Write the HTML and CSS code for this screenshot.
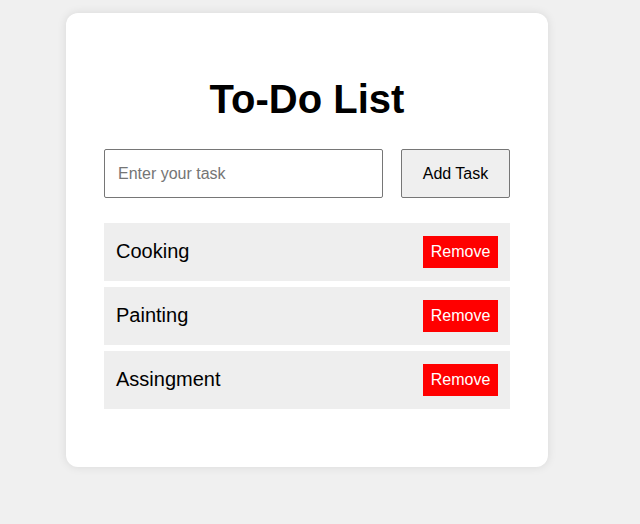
FILE: index.html
```html
<!DOCTYPE html>
<html>
<head>
<meta charset="utf-8">
<link rel="stylesheet" href="styles.css">
</head>
<body>
<div class="card">
  <h1 class="title">To-Do List</h1>
  <div class="entry">
    <input class="task-input" type="text" placeholder="Enter your task">
    <button class="add-btn">Add Task</button>
  </div>
  <ul class="list">
    <li class="item"><span class="item-text">Cooking</span><button class="remove-btn">Remove</button></li>
    <li class="item"><span class="item-text">Painting</span><button class="remove-btn">Remove</button></li>
    <li class="item"><span class="item-text">Assingment</span><button class="remove-btn">Remove</button></li>
  </ul>
</div>
</body>
</html>
```

FILE: styles.css
```css
* { box-sizing: border-box; }
html, body { margin: 0; padding: 0; }
body {
  background: #f0f0f0;
  font-family: "Liberation Sans", Arial, sans-serif;
  height: 524px;
  overflow: hidden;
}
.card {
  width: 482px;
  margin: 13px 0 0 66px;
  background: #fff;
  border-radius: 12px;
  box-shadow: 0 0 10px rgba(0, 0, 0, 0.1);
  padding: 63px 38px 58px;
}
.title {
  margin: 0 0 27px;
  font-size: 40px;
  line-height: 46px;
  font-weight: bold;
  text-align: center;
  color: #000;
}
.entry {
  display: flex;
  gap: 18px;
  height: 49px;
}
.task-input {
  flex: 1;
  height: 49px;
  border: 1px solid #767676;
  border-radius: 2px;
  padding: 0 13px;
  font-family: "Liberation Sans", Arial, sans-serif;
  font-size: 16px;
  color: #000;
  outline: none;
}
.task-input::placeholder { color: #757575; }
.add-btn {
  width: 109px;
  height: 49px;
  border: 1px solid #767676;
  border-radius: 2px;
  background: #efefef;
  font-family: "Liberation Sans", Arial, sans-serif;
  font-size: 16px;
  color: #000;
  padding: 0;
}
.list {
  list-style: none;
  margin: 25px 0 0;
  padding: 0;
  display: flex;
  flex-direction: column;
  gap: 6.5px;
}
.item {
  display: flex;
  align-items: center;
  justify-content: space-between;
  height: 57.5px;
  padding: 0 12px;
  background: #eeeeee;
}
.item-text {
  font-size: 20px;
  color: #000;
}
.remove-btn {
  width: 75px;
  height: 32px;
  background: #ff0000;
  color: #fff;
  border: none;
  padding: 0;
  font-family: "Liberation Sans", Arial, sans-serif;
  font-size: 16px;
}
```
